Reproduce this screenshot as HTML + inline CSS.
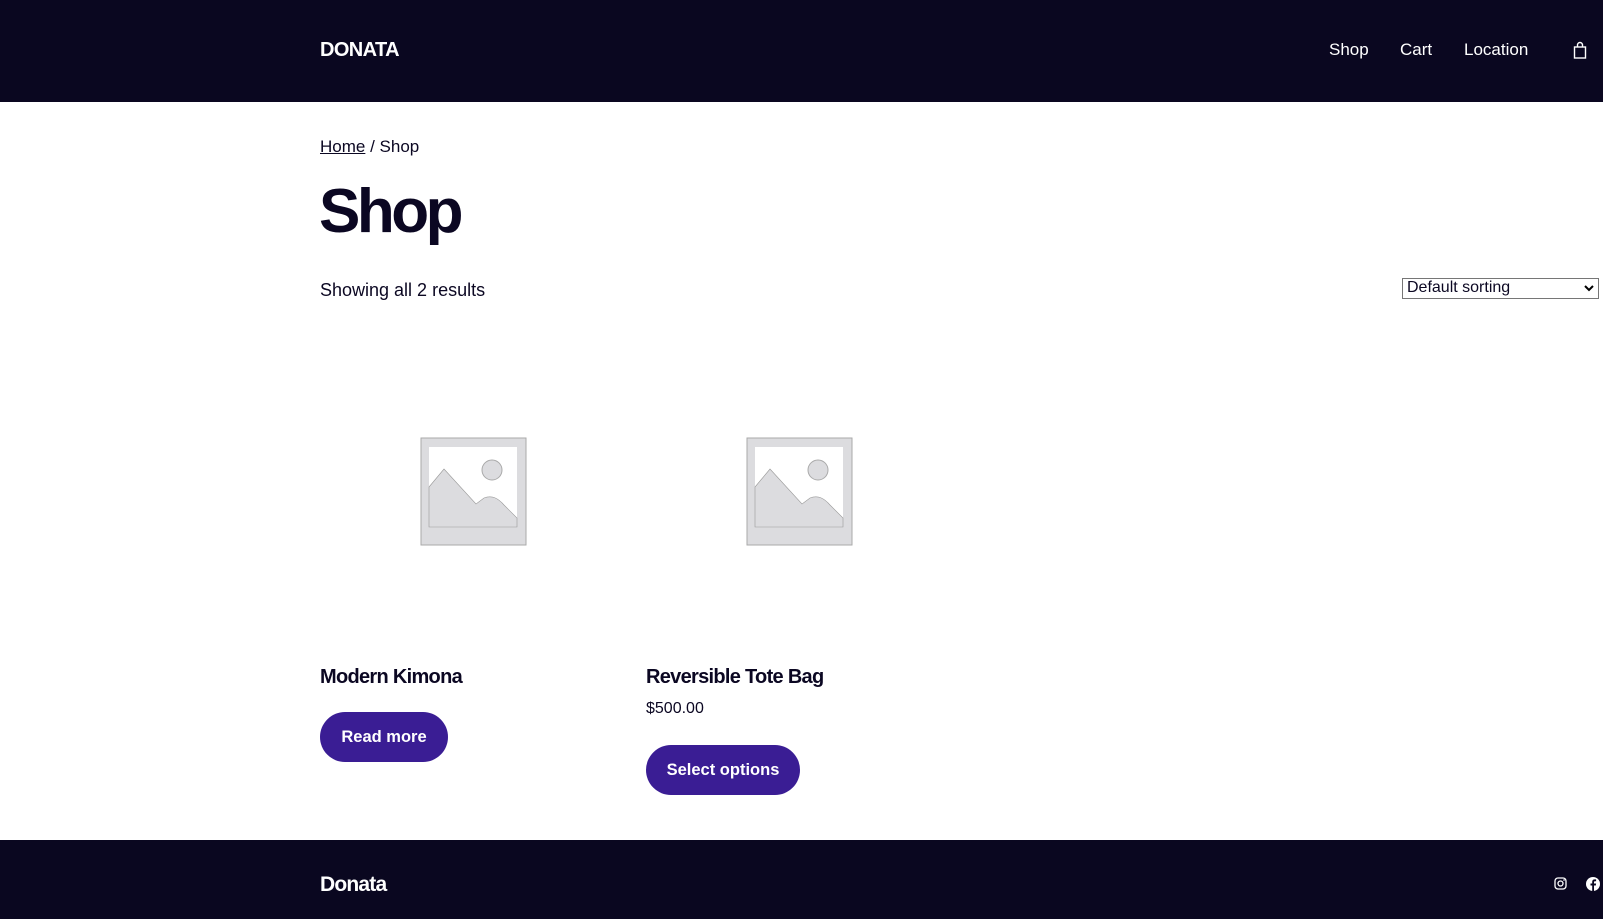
<!DOCTYPE html>
<html><head><meta charset="utf-8"><style>
*{margin:0;padding:0;box-sizing:border-box}
body{width:1603px;height:919px;overflow:hidden;background:#fff;font-family:"Liberation Sans",sans-serif;color:#0b0722;position:relative}
.a{position:absolute;white-space:nowrap}
header{position:absolute;left:0;top:0;width:1603px;height:102px;background:#0a0720}
footer{position:absolute;left:0;top:840px;width:1603px;height:79px;background:#0a0720}
.w{color:#fff}
.btn{position:absolute;background:#3a1d94;color:#fff;border-radius:26px;font-weight:bold;font-size:16.5px;display:flex;align-items:center;justify-content:center}
</style></head><body>
<header>
<div class="a w" style="left:320px;top:39px;font-size:20px;font-weight:bold;letter-spacing:-0.6px">DONATA</div>
<div class="a w" style="left:1329px;top:40px;font-size:17px">Shop</div>
<div class="a w" style="left:1400px;top:40px;font-size:17px">Cart</div>
<div class="a w" style="left:1464px;top:40px;font-size:17px">Location</div>
<svg class="a" style="left:1572px;top:41px" width="16" height="18" viewBox="0 0 16 18"><rect x="2.5" y="6" width="11" height="11" fill="none" stroke="#fff" stroke-width="1.4"/><path d="M5.5 6V4a2.5 2.5 0 0 1 5 0v2" fill="none" stroke="#fff" stroke-width="1.4"/></svg>
</header>
<div class="a" style="left:320px;top:137px;font-size:17px"><span style="text-decoration:underline">Home</span> / Shop</div>
<div class="a" style="left:319px;top:176px;font-size:62px;font-weight:bold;letter-spacing:-3.5px">Shop</div>
<div class="a" style="left:320px;top:280px;font-size:18px">Showing all 2 results</div>
<div class="a" style="left:1402px;top:278px;width:197px;height:21px;border:1px solid #767676;font-size:16px;padding-left:4px;line-height:18px;background:#fff">Default sorting<svg style="position:absolute;right:4px;top:6px" width="10" height="7" viewBox="0 0 10 7"><path d="M1 1l4 4 4-4" fill="none" stroke="#000" stroke-width="2"/></svg></div>

<svg class="a" style="left:420px;top:437px" width="107" height="109" viewBox="0 0 107 109"><rect x="1" y="1" width="105" height="107" fill="#dcdcdf" stroke="#aaa"/><rect x="9" y="10" width="88" height="72" fill="#fff"/><path d="M9 50l15-18 32 35 8-6c8-3 14 0 20 7l13 13v9H9z" fill="#dcdcdf" stroke="#999" stroke-width=".6"/><circle cx="72" cy="33" r="10" fill="#dcdcdf" stroke="#aaa"/></svg>
<svg class="a" style="left:746px;top:437px" width="107" height="109" viewBox="0 0 107 109"><rect x="1" y="1" width="105" height="107" fill="#dcdcdf" stroke="#aaa"/><rect x="9" y="10" width="88" height="72" fill="#fff"/><path d="M9 50l15-18 32 35 8-6c8-3 14 0 20 7l13 13v9H9z" fill="#dcdcdf" stroke="#999" stroke-width=".6"/><circle cx="72" cy="33" r="10" fill="#dcdcdf" stroke="#aaa"/></svg>

<div class="a" style="left:320px;top:666px;font-size:20px;font-weight:bold;letter-spacing:-0.7px">Modern Kimona</div>
<div class="btn" style="left:320px;top:712px;width:128px;height:50px">Read more</div>
<div class="a" style="left:646px;top:666px;font-size:20px;font-weight:bold;letter-spacing:-0.7px">Reversible Tote Bag</div>
<div class="a" style="left:646px;top:700px;font-size:16px">$500.00</div>
<div class="btn" style="left:646px;top:745px;width:154px;height:50px">Select options</div>

<footer>
<div class="a w" style="left:320px;top:33px;font-size:21px;font-weight:bold;letter-spacing:-0.8px">Donata</div>
<svg class="a" style="left:1554px;top:37px" width="13" height="13" viewBox="0 0 13 13"><rect x="1" y="1" width="11" height="11" rx="3" fill="none" stroke="#fff" stroke-width="1.3"/><circle cx="6.5" cy="6.5" r="2.5" fill="none" stroke="#fff" stroke-width="1.3"/><circle cx="10" cy="3" r=".8" fill="#fff"/></svg>
<svg class="a" style="left:1586px;top:37px" width="14" height="14" viewBox="0 0 14 14"><circle cx="7" cy="7" r="7" fill="#fff"/><path d="M8 14V8.5h1.8l.3-2H8V5.3c0-.6.2-1 1-1h1.1V2.5C9.8 2.4 9.2 2.4 8.6 2.4 7.2 2.4 6.2 3.2 6.2 4.8v1.7H4.5v2h1.7V14z" fill="#0a0720"/></svg>
</footer>
</body></html>
